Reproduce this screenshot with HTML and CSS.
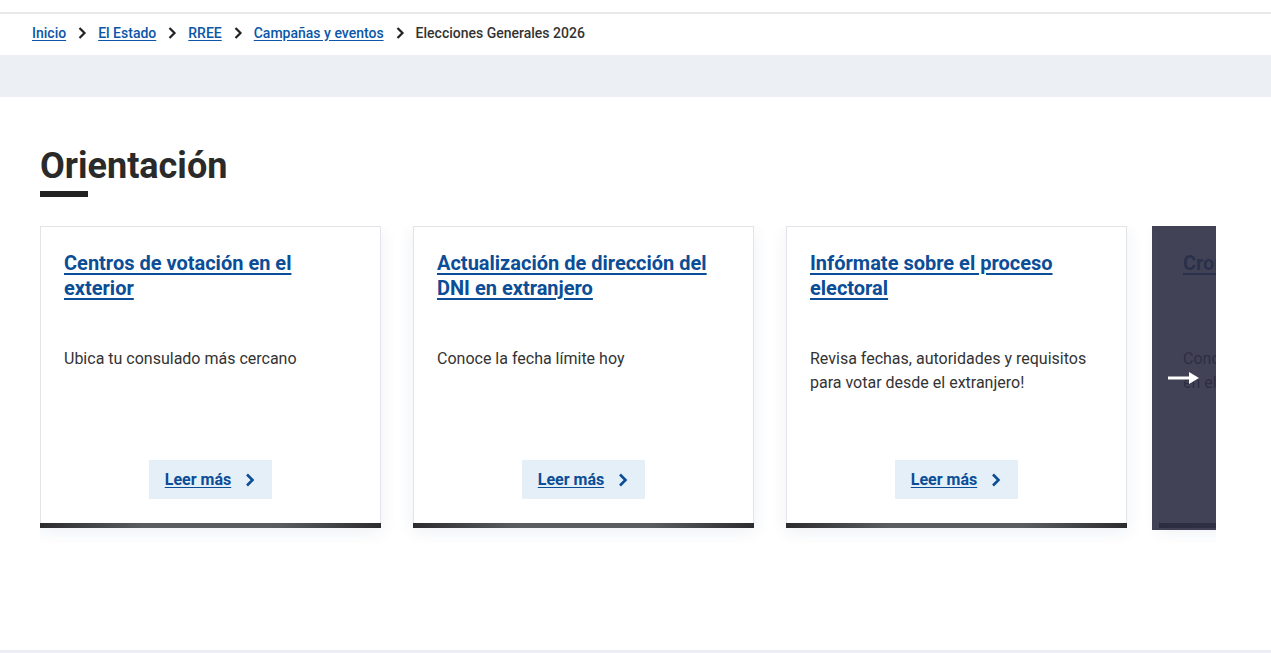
FILE: index.html
```html
<!DOCTYPE html>
<html lang="es">
<head>
<meta charset="utf-8">
<title>Elecciones Generales 2026</title>
<link rel="stylesheet" href="styles.css">
</head>
<body>
<div class="topgap"></div>
<nav class="breadcrumb">
  <a href="#">Inicio</a>
  <svg class="sep" viewBox="0 0 10 14" width="10" height="14"><path d="M2.5 2 L7.5 7 L2.5 12" fill="none" stroke="#222" stroke-width="2.2"/></svg>
  <a href="#">El Estado</a>
  <svg class="sep" viewBox="0 0 10 14" width="10" height="14"><path d="M2.5 2 L7.5 7 L2.5 12" fill="none" stroke="#222" stroke-width="2.2"/></svg>
  <a href="#">RREE</a>
  <svg class="sep" viewBox="0 0 10 14" width="10" height="14"><path d="M2.5 2 L7.5 7 L2.5 12" fill="none" stroke="#222" stroke-width="2.2"/></svg>
  <a href="#">Campañas y eventos</a>
  <svg class="sep" viewBox="0 0 10 14" width="10" height="14"><path d="M2.5 2 L7.5 7 L2.5 12" fill="none" stroke="#222" stroke-width="2.2"/></svg>
  <span class="current">Elecciones Generales 2026</span>
</nav>
<div class="band"></div>
<main class="section">
  <h2 class="title">Orientación</h2>
  <div class="title-bar"></div>
  <div class="carousel">
    <div class="track">
      <article class="card">
        <a class="card-title" href="#">Centros de votación en el exterior</a>
        <p class="card-desc">Ubica tu consulado más cercano</p>
        <a class="btn" href="#"><span>Leer más</span><svg viewBox="0 0 12 16" width="12" height="16"><path d="M3 2.5 L8.5 8 L3 13.5" fill="none" stroke="#0b4d96" stroke-width="2.6"/></svg></a>
      </article>
      <article class="card">
        <a class="card-title" href="#">Actualización de dirección del DNI en extranjero</a>
        <p class="card-desc">Conoce la fecha límite hoy</p>
        <a class="btn" href="#"><span>Leer más</span><svg viewBox="0 0 12 16" width="12" height="16"><path d="M3 2.5 L8.5 8 L3 13.5" fill="none" stroke="#0b4d96" stroke-width="2.6"/></svg></a>
      </article>
      <article class="card">
        <a class="card-title" href="#">Infórmate sobre el proceso electoral</a>
        <p class="card-desc">Revisa fechas, autoridades y requisitos para votar desde el extranjero!</p>
        <a class="btn" href="#"><span>Leer más</span><svg viewBox="0 0 12 16" width="12" height="16"><path d="M3 2.5 L8.5 8 L3 13.5" fill="none" stroke="#0b4d96" stroke-width="2.6"/></svg></a>
      </article>
      <article class="card">
        <a class="card-title" href="#">Cronograma electoral</a>
        <p class="card-desc">Conoce las fechas del proceso electoral en el extranjero</p>
        <a class="btn" href="#"><span>Leer más</span><svg viewBox="0 0 12 16" width="12" height="16"><path d="M3 2.5 L8.5 8 L3 13.5" fill="none" stroke="#0b4d96" stroke-width="2.6"/></svg></a>
      </article>
    </div>
    <button class="next" aria-label="Siguiente">
      <svg viewBox="0 0 32 14" width="32" height="14"><path d="M0 7 H24" stroke="#fff" stroke-width="3"/><path d="M21 1 L31 7 L21 13 Z" fill="#fff"/></svg>
    </button>
  </div>
</main>
<div class="bottom-line"></div>
</body>
</html>
```

FILE: styles.css
```css
* { box-sizing: border-box; }
html, body { margin: 0; padding: 0; }
body {
  font-family: Roboto, "Liberation Sans", Arial, sans-serif;
  background: #fff;
  color: #333;
  height: 653px;
  overflow: hidden;
  display: flex;
  flex-direction: column;
}
.topgap {
  height: 14px;
  border-bottom: 2px solid #e9e9ec;
  flex: none;
}
.breadcrumb {
  height: 41px;
  flex: none;
  display: flex;
  align-items: center;
  padding: 0 0 4px 32px;
  gap: 11px;
  font-size: 14px;
  font-weight: 500;
}
.breadcrumb a {
  color: #0b56a8;
  text-decoration: underline;
  text-underline-offset: 2px;
}
.breadcrumb .sep { flex: none; }
.breadcrumb .current { color: #333; }
.band {
  height: 42px;
  background: #eceff4;
  flex: none;
}
.section {
  flex: 1;
  padding: 48px 0 0 40px;
}
.title {
  margin: 0;
  font-size: 36px;
  line-height: 42px;
  font-weight: 700;
  color: #2a2a2a;
}
.title-bar {
  width: 48px;
  height: 6px;
  background: #222;
  margin-top: 4px;
}
.carousel {
  position: relative;
  margin-top: 29px;
  width: 1176px;
  overflow: hidden;
  padding-bottom: 16px;
}
.track {
  display: flex;
  gap: 32px;
}
.card {
  flex: none;
  width: 341px;
  height: 302px;
  background: #fff;
  border: 1px solid #e2e4e8;
  border-bottom: 5px solid #3a3a3d;
  box-shadow: 0 4px 16px rgba(30, 60, 110, 0.08);
  display: flex;
  flex-direction: column;
  padding: 24px 23px 24px;
  position: relative;
}
.card::after {
  content: "";
  position: absolute;
  left: -1px;
  right: -1px;
  bottom: -5px;
  height: 5px;
  background: linear-gradient(90deg, #2c2c2e 0%, #5a5c60 30%, #5a5c60 70%, #2c2c2e 100%);
}
.card-title {
  display: block;
  min-height: 50px;
  font-size: 20px;
  line-height: 25px;
  font-weight: 700;
  color: #0b4d96;
  text-decoration: underline;
  text-underline-offset: 3px;
  text-decoration-thickness: 2px;
}
.card-desc {
  margin: 46px 0 0;
  font-size: 16px;
  line-height: 24px;
  color: #333;
}
.btn {
  margin-top: auto;
  align-self: center;
  height: 39px;
  padding: 0 16px;
  display: flex;
  align-items: center;
  gap: 13px;
  background: #e5eff8;
  color: #0b4d96;
  font-size: 16px;
  font-weight: 700;
  text-decoration: none;
}
.btn span {
  text-decoration: underline;
  text-underline-offset: 2px;
}
.next {
  position: absolute;
  left: 1112px;
  top: 0;
  width: 64px;
  height: 304px;
  border: 0;
  padding: 0 0 0 16px;
  margin: 0;
  background: rgba(44, 46, 66, 0.9);
  display: flex;
  align-items: center;
  cursor: pointer;
}
.bottom-line {
  height: 3px;
  background: #eceef3;
  flex: none;
}
```
